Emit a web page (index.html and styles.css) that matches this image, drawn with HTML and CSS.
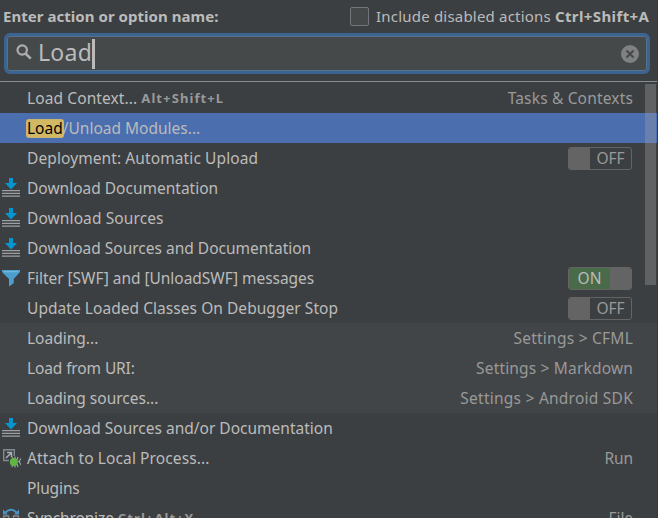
FILE: index.html
```html
<!DOCTYPE html>
<html lang="en">
<head>
<meta charset="utf-8">
<title>Find Action</title>
<link rel="stylesheet" href="styles.css">
</head>
<body>
<svg class="defs" aria-hidden="true">
  <symbol id="download" viewBox="0 0 20 20">
    <path fill="#0795cf" d="M8 0h4v5h4l-6 6.500L4 5h4z"/>
    <path fill="#9da1a3" d="M1 12h18v1.300H1zM1 14.700h18V16H1zM1 17.400h18v1.300H1z"/>
  </symbol>
  <symbol id="filter" viewBox="0 0 20 20">
    <path fill="#4c9fcd" d="M1 2h18v2l-6.300 7v4.200L8 18.400V11L1 4z"/>
    <path fill="#7dbde0" d="M3 3.200h14v1H3z"/>
  </symbol>
  <symbol id="attach" viewBox="0 0 20 20">
    <path fill="none" stroke="#7f8b91" stroke-width="1.400" d="M8 12.500H2.700V1.700h10.600V8"/>
    <path fill="none" stroke="#a7b0b5" stroke-width="1.500" d="M5 10l5-5M6 4.600h4.500V9"/>
    <path fill="none" stroke="#a0a6a9" stroke-width="1.100" d="M11 9l1 3M14 8.500v3M17 9l-1 3M11 19l1-3M14 19.500v-3M17 19l-1-3M20.500 10l-2.500 3.500 2.500 4M17 13.500h2"/>
    <circle cx="12.800" cy="14" r="4" fill="#62b543"/>
  </symbol>
  <symbol id="sync" viewBox="0 0 20 20">
    <path fill="none" stroke="#4a95c6" stroke-width="1.800" d="M4.500 4.500Q10-1 15.500 4.500"/>
    <path fill="#4a95c6" d="M2 1.500v5h5zM18 1.500v5h-5z"/>
    <path fill="none" stroke="#858a8d" stroke-width="1.300" d="M2.700 8h5v8h-5zM12.500 8h5v8h-5z"/>
  </symbol>
</svg>
<div class="popup">
  <header class="head">
    <b class="title">Enter action or option name:</b>
    <label class="option"><span class="checkbox"></span><span class="optlabel">Include disabled actions</span><b class="optkey">Ctrl+Shift+A</b></label>
  </header>
  <div class="search">
    <svg class="glass" viewBox="0 0 16 16"><circle cx="6.200" cy="6" r="4.700" fill="none" stroke="#adadad" stroke-width="2.200"/><path d="M9.500 9.500l5.300 5.200" stroke="#adadad" stroke-width="2.500"/></svg>
    <span class="query">Load</span><span class="caret"></span>
    <svg class="clear" viewBox="0 0 18 18"><circle cx="9" cy="9" r="9" fill="#7f8182"/><path d="M5.500 5.500l7 7M12.500 5.500l-7 7" stroke="#45494a" stroke-width="2"/></svg>
  </div>
  <div class="results">
    <div class="row"><span class="icon"></span><span class="name wide">Load Context...</span><b class="key">Alt+Shift+L</b><span class="group">Tasks &amp; Contexts</span></div>
    <div class="row selected"><span class="icon"></span><span class="name"><mark>Load</mark>/Unload Modules...</span></div>
    <div class="row"><span class="icon"></span><span class="name wide">Deployment: Automatic Upload</span><span class="toggle off"><i></i><span>OFF</span></span></div>
    <div class="row"><svg class="icon"><use href="#download"/></svg><span class="name">Download Documentation</span></div>
    <div class="row"><svg class="icon"><use href="#download"/></svg><span class="name wide">Download Sources</span></div>
    <div class="row"><svg class="icon"><use href="#download"/></svg><span class="name">Download Sources and Documentation</span></div>
    <div class="row"><svg class="icon"><use href="#filter"/></svg><span class="name tight">Filter [SWF] and [UnloadSWF] messages</span><span class="toggle on"><span>ON</span><i></i></span></div>
    <div class="row"><span class="icon"></span><span class="name slight">Update Loaded Classes On Debugger Stop</span><span class="toggle off"><i></i><span>OFF</span></span></div>
    <div class="row setting"><span class="icon"></span><span class="name">Loading...</span><span class="group wider">Settings &gt; CFML</span></div>
    <div class="row setting"><span class="icon"></span><span class="name tighter">Load from URI:</span><span class="group">Settings &gt; Markdown</span></div>
    <div class="row setting"><span class="icon"></span><span class="name">Loading sources...</span><span class="group wider">Settings &gt; Android SDK</span></div>
    <div class="row"><svg class="icon"><use href="#download"/></svg><span class="name">Download Sources and/or Documentation</span></div>
    <div class="row"><svg class="icon"><use href="#attach"/></svg><span class="name wide">Attach to Local Process...</span><span class="group narrow">Run</span></div>
    <div class="row"><span class="icon"></span><span class="name tighter">Plugins</span></div>
    <div class="row"><svg class="icon"><use href="#sync"/></svg><span class="name tighter">Synchronize</span><b class="key">Ctrl+Alt+Y</b><span class="group narrow">File</span></div>
    <div class="scrollbar"></div>
  </div>
</div>
</body>
</html>
```
FILE: styles.css
```css
* { box-sizing: border-box; }
body { margin: 0; background: #3c3f41; color: #bbbbbb; font: 15.5px/30px "Noto Sans", "Open Sans", sans-serif; }
.defs { position: absolute; width: 0; height: 0; }
.popup { width: 658px; height: 518px; overflow: hidden; display: flex; flex-direction: column; border-right: 1px solid #393b3c; }
.head { height: 33px; flex: none; display: flex; justify-content: space-between; padding: 0 8px 0 3px; white-space: nowrap; font-size: 15px; }
.option { display: flex; align-items: center; height: 32px; }
.title { line-height: 32px; letter-spacing: .04px; }
.checkbox { width: 19px; height: 19px; border: 1px solid #73777a; border-radius: 2px; background: #45494a; margin-right: 7px; }
.optlabel { margin-right: 4px; letter-spacing: .2px; }
.optkey { letter-spacing: .4px; margin-right: -.4px; }
.search { flex: none; height: 41px; margin: 0 7px 0 4px; border: 3px solid #3c6490; border-radius: 6px; background: #45494a; box-shadow: inset 0 0 0 1px #56718c; display: flex; align-items: center; padding: 0 8px 0 9px; }
.glass { width: 16px; height: 16px; margin: 0 6px 4px 0; }
.query { font-size: 23px; line-height: 34px; letter-spacing: .3px; margin-top: -4px; }
.caret { width: 3px; height: 30px; background: #bbbbbb; }
.clear { width: 18px; height: 18px; margin-left: auto; }
.results { position: relative; flex: none; margin-top: 7px; border-top: 1px solid #8a8c8d; padding-top: 1px; }
.row { height: 30px; display: flex; align-items: center; padding: 0 24px 0 1px; white-space: nowrap; }
.selected { background: #4b6eaf; }
.setting { background: #424547; }
.icon { width: 20px; height: 20px; margin-right: 6px; flex: none; overflow: visible; }
.wide { letter-spacing: .1px; }
.slight { letter-spacing: .05px; }
.tight { letter-spacing: -.04px; }
.tighter { letter-spacing: -.12px; }
mark { background: #d3b863; color: #000; border-radius: 2px; box-shadow: 0 0 0 1px #c9b571; display: inline-block; line-height: 17px; }
.key { font-size: 13px; color: #999; margin-left: 4px; letter-spacing: 1.1px; }
.group { margin-left: auto; color: #999; letter-spacing: .17px; }
.group.wider { letter-spacing: .24px; }
.group.narrow { letter-spacing: -.1px; }
.toggle { margin-left: auto; margin-right: 1px; width: 64px; height: 23px; border: 1px solid #646464; border-radius: 3px; display: flex; line-height: 21px; color: #999; overflow: hidden; }
.toggle i { width: 21px; background: #646464; }
.toggle span { flex: 1; text-align: center; }
.toggle.on span { background: #4a6b4a; color: #bbb; }
.scrollbar { position: absolute; top: 2px; right: 1px; width: 11px; height: 201px; background: rgba(166, 166, 166, .33); }
```
